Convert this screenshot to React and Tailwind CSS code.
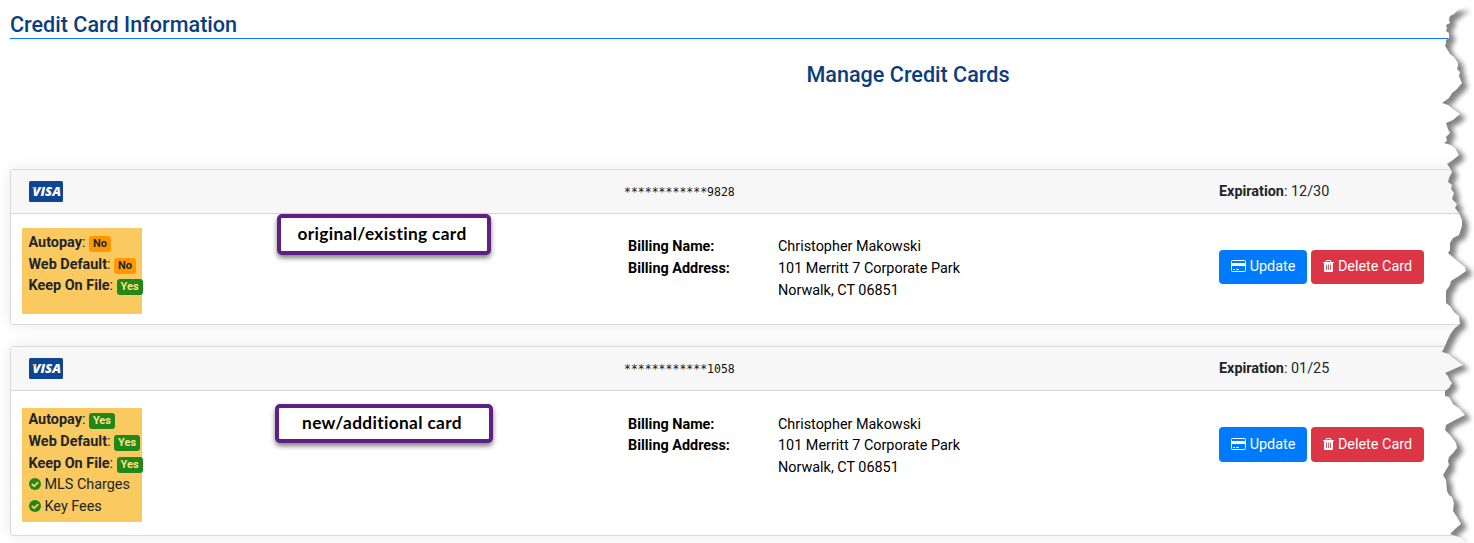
import clsx from 'clsx';

const cards = [
  {
    id: 1,
    number: '************9828',
    expiration: '12/30',
    note: 'original/existing card',
    flags: [
      { label: 'Autopay', value: 'No' },
      { label: 'Web Default', value: 'No' },
      { label: 'Keep On File', value: 'Yes' },
    ],
    charges: [],
  },
  {
    id: 2,
    number: '************1058',
    expiration: '01/25',
    note: 'new/additional card',
    flags: [
      { label: 'Autopay', value: 'Yes' },
      { label: 'Web Default', value: 'Yes' },
      { label: 'Keep On File', value: 'Yes' },
    ],
    charges: ['MLS Charges', 'Key Fees'],
  },
];

// Torn right edge, top to bottom
const edge =
  '65,7 58,10 54,14 50,16 49,20 50,23 46,25 47,28 46,31 49,33 49,38 46,40 46,43 45,46 47,49 50,54 54,57 58,63 58,66 57,69 60,72 59,76 62,83 57,89 52,93 49,98 42,103 48,105 53,109 60,114 53,120 46,123 48,129 50,133 46,137 47,141 44,143 51,145 55,148 59,155 53,160 47,164 50,168 52,172 49,178 48,182 52,185 51,189 54,193 52,199 57,204 55,208 59,213 62,220 62,226 59,235 53,238 50,243 50,250 48,253 54,258 60,263 65,267 66,271 59,276 51,281 50,285 46,291 46,303 50,306 54,312 59,316 60,324 55,328 51,333 47,341 45,346 42,352 49,354 52,357 63,365 52,370 45,373 48,376 49,379 52,383 49,388 45,391 45,396 49,397 53,404 60,409 65,415 55,420 46,425 45,430 51,436 56,443 57,448 53,453 49,457 48,461 49,465 46,470 43,475 46,480 47,491 49,495 52,497 54,503 53,511 57,517 61,524 55,529 50,534 56,536 62,538';

function TornEdge() {
  return (
    <svg className="absolute top-0 right-0 h-[543px] w-[74px]" viewBox="0 0 74 543" aria-hidden="true">
      <defs>
        <clipPath id="outside">
          <polygon points={`66,0 ${edge} 66,543 74,543 74,0`} />
        </clipPath>
        <filter id="soft" x="-20%" y="-5%" width="140%" height="110%">
          <feGaussianBlur stdDeviation="2.6" />
        </filter>
      </defs>
      <polygon points={`66,0 ${edge} 66,543 74,543 74,0`} fill="#fff" shapeRendering="crispEdges" />
      <g clipPath="url(#outside)">
        <polygon
          points={`20,7 ${edge} 20,538`}
          transform="translate(6 4)"
          fill="#848484"
          filter="url(#soft)"
        />
      </g>
    </svg>
  );
}

function VisaLogo() {
  return (
    <svg className="block h-[21px] w-[34px]" viewBox="0 0 34 21">
      <rect width="34" height="21" rx="1.5" fill="#0e4595" />
      <text
        x="3.5"
        y="15"
        textLength="28.5"
        lengthAdjust="spacingAndGlyphs"
        fill="#fff"
        fontFamily="Open Sans"
        fontSize="12.5"
        fontWeight="800"
        fontStyle="italic"
      >
        VISA
      </text>
      <path d="M2.5 6h3.5l1.5 3.5Q6 7.3 2.5 6Z" fill="#f2ae14" />
    </svg>
  );
}

function CardIcon() {
  return (
    <svg className="mb-[2px] h-3 w-[15px]" viewBox="0 0 15 12">
      <rect x=".5" y=".5" width="14" height="11" rx="1" fill="none" stroke="currentColor" />
      <path d="M0 3h15v3H0zM2 9h2v1H2zM5 9h3v1H5z" fill="currentColor" />
    </svg>
  );
}

function TrashIcon() {
  return (
    <svg className="mb-[2px] h-3 w-[11px]" viewBox="0 0 11 12">
      <path d="M3 2 3.6.5h3.8L8 2" fill="none" stroke="currentColor" />
      <path d="M0 2h11v1H0zM1 3h9v8q0 1-1 1H2q-1 0-1-1z" fill="currentColor" />
      <path d="M3.5 4.5v5.5M5.5 4.5v5.5M7.5 4.5v5.5" stroke="#dc3545" strokeWidth=".8" />
    </svg>
  );
}

function CheckIcon() {
  return (
    <svg className="mb-px size-3" viewBox="0 0 12 12">
      <circle cx="6" cy="6" r="6" fill="#218718" />
      <path d="M2.8 5.8 5.2 8.2 9.3 4.1" fill="none" stroke="#fac95f" strokeWidth="1.9" />
    </svg>
  );
}

function Badge({ value }) {
  return (
    <span
      className={clsx(
        'mt-[4px] ml-[3.5px] h-4 rounded-[3px] px-1 text-[11px] leading-[15px] font-bold',
        value === 'Yes' ? 'bg-[#218718] text-[#fbe58a]' : 'bg-[#ff9800] text-[#212529]'
      )}
    >
      {value}
    </span>
  );
}

function CreditCard({ card }) {
  const isFirst = card.id === 1;

  return (
    <div
      className={clsx(
        'relative flex w-[1600px] flex-col rounded-[3px] border border-[#dadada] bg-white shadow-[0_0_16px_rgba(0,0,0,0.09)]',
        isFirst ? 'h-[156px]' : 'mt-[21px] h-[190px]'
      )}
    >
      {/* Card Header */}
      <div className="flex h-[44px] shrink-0 items-center border-b border-[#d6d6d6] bg-[#f7f7f7] pl-[18px]">
        <div className="w-[595px]">
          <VisaLogo />
        </div>
        <div className="w-[595px] pt-0.5 font-['DejaVu_Sans_Mono',monospace] text-[11.5px] text-[#111]">
          {card.number}
        </div>
        <div>
          <span className="font-bold">Expiration</span>: {card.expiration}
        </div>
      </div>

      {/* Card Body */}
      <div className="flex pl-[11px]">
        <div className={clsx('w-[606px]', isFirst ? 'pt-[14px]' : 'pt-[17px]')}>
          <div
            className={clsx(
              'w-[120px] bg-[#fac95f] pl-[6.5px] whitespace-nowrap',
              isFirst ? 'h-[86px] pt-[4px]' : 'h-[114px] pt-[1.4px]'
            )}
          >
            {card.flags.map((flag) => (
              <div key={flag.label} className="flex h-[21.6px] items-start">
                <span>
                  <span className="font-bold">{flag.label}</span>:
                </span>
                <Badge value={flag.value} />
              </div>
            ))}
            {card.charges.map((charge) => (
              <div key={charge} className="flex h-[21.6px] items-center gap-[4px]">
                <CheckIcon />
                {charge}
              </div>
            ))}
          </div>
        </div>

        <div className={clsx('flex w-[591px] text-black', isFirst ? 'pt-[22.4px]' : 'pt-[22.5px]')}>
          <div className="w-[150px] font-bold">
            <p>Billing Name:</p>
            <p>Billing Address:</p>
          </div>
          <div>
            <p>Christopher Makowski</p>
            <p>101 Merritt 7 Corporate Park</p>
            <p>Norwalk, CT 06851</p>
          </div>
        </div>

        <div className="flex gap-1 pt-[36px] text-white">
          <button
            className={clsx(
              'flex w-[88px] items-center justify-center gap-1 rounded-[4px] bg-[#007bff]',
              isFirst ? 'h-[34px]' : 'h-[35px]'
            )}
          >
            <CardIcon />
            Update
          </button>
          <button
            className={clsx(
              'flex w-[113px] items-center justify-center gap-1 rounded-[4px] bg-[#dc3545]',
              isFirst ? 'h-[34px]' : 'h-[35px]'
            )}
          >
            <TrashIcon />
            Delete Card
          </button>
        </div>
      </div>

      {/* Callout */}
      <div
        className={clsx(
          "absolute flex items-center justify-center rounded-[5px] border-4 border-[#5f1f85] bg-white pr-1 pb-0.5 font-['Lato',sans-serif] text-[17.3px] font-bold tracking-[0.35px] text-black shadow-[0_3px_5px_rgba(0,0,0,0.5)]",
          isFirst ? 'top-[44px] left-[266px] h-[41px] w-[214px]' : 'top-[57px] left-[264px] h-[39px] w-[218px]'
        )}
      >
        {card.note}
      </div>
    </div>
  );
}

export default function App() {
  return (
    <div className="relative h-[543px] w-[1474px] overflow-hidden bg-white pl-[10px] font-['Roboto',sans-serif] text-[14.4px] leading-[21.6px] text-[#212529]">
      <h1 className="h-[39px] w-[1600px] border-b border-[#007bff] pt-[12px] text-[21.6px] leading-[26px] font-medium text-[#0b3e7c]">
        Credit Card Information
      </h1>
      <h2 className="w-[1796px] pt-[23px] pb-[81px] text-center text-[21.6px] leading-[26px] font-medium text-[#0b3e7c]">
        Manage Credit Cards
      </h2>

      {cards.map((card) => (
        <CreditCard key={card.id} card={card} />
      ))}

      <TornEdge />
    </div>
  );
}
